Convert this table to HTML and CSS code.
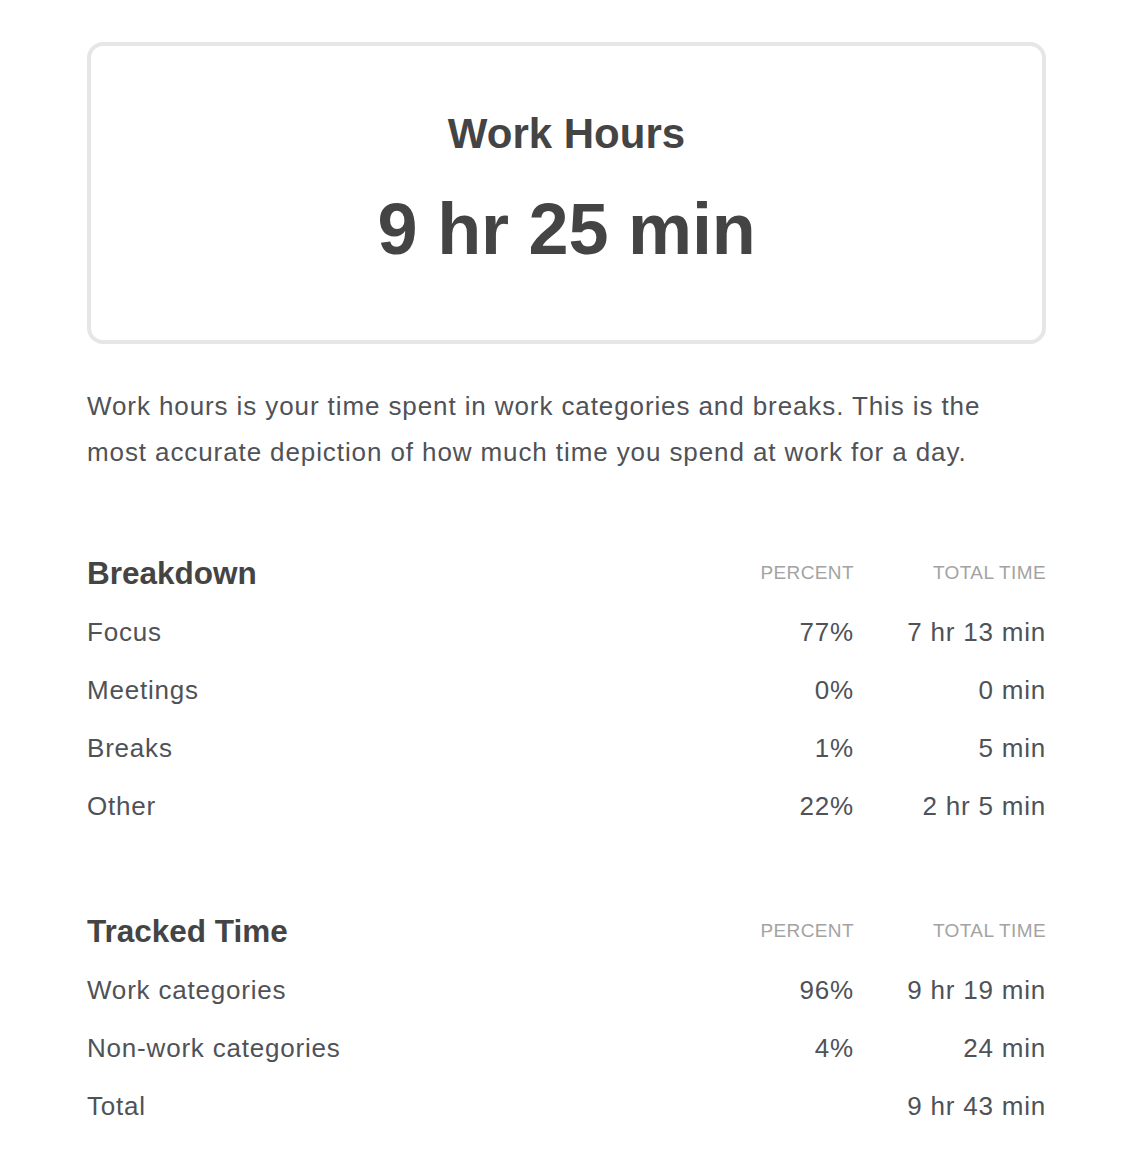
FILE: index.html
```html
<!DOCTYPE html>
<html lang="en">
<head>
<meta charset="utf-8">
<title>Work Hours</title>
<link rel="stylesheet" href="styles.css">
</head>
<body>
<main class="page">
  <section class="card">
    <h1 class="card-title">Work Hours</h1>
    <div class="card-value">9 hr 25 min</div>
  </section>

  <p class="intro">Work hours is your time spent in work categories and breaks. This is the most accurate depiction of how much time you spend at work for a day.</p>

  <section class="table table-breakdown">
    <div class="row head">
      <h2 class="label heading">Breakdown</h2>
      <div class="pct col-label">PERCENT</div>
      <div class="time col-label">TOTAL TIME</div>
    </div>
    <div class="rows">
      <div class="row"><span class="label">Focus</span><span class="pct">77%</span><span class="time">7 hr 13 min</span></div>
      <div class="row"><span class="label">Meetings</span><span class="pct">0%</span><span class="time">0 min</span></div>
      <div class="row"><span class="label">Breaks</span><span class="pct">1%</span><span class="time">5 min</span></div>
      <div class="row"><span class="label">Other</span><span class="pct">22%</span><span class="time">2 hr 5 min</span></div>
    </div>
  </section>

  <section class="table table-tracked">
    <div class="row head">
      <h2 class="label heading">Tracked Time</h2>
      <div class="pct col-label">PERCENT</div>
      <div class="time col-label">TOTAL TIME</div>
    </div>
    <div class="rows">
      <div class="row"><span class="label">Work categories</span><span class="pct">96%</span><span class="time">9 hr 19 min</span></div>
      <div class="row"><span class="label">Non-work categories</span><span class="pct">4%</span><span class="time">24 min</span></div>
      <div class="row"><span class="label">Total</span><span class="pct"></span><span class="time">9 hr 43 min</span></div>
    </div>
  </section>
</main>
</body>
</html>
```

FILE: styles.css
```css
html, body {
  margin: 0;
  padding: 0;
  background: #ffffff;
}

body {
  font-family: "Liberation Sans", Arial, Helvetica, sans-serif;
  color: #4f5257;
}

.page {
  width: 959px;
  margin: 42px 0 0 87px;
}

.card {
  border: 4px solid #e6e6e6;
  border-radius: 16px;
  padding: 64px 0 71px;
  text-align: center;
  color: #444444;
}

.card-title {
  margin: 0;
  font-size: 42px;
  line-height: 48px;
  font-weight: 700;
}

.card-value {
  margin-top: 31px;
  font-size: 72px;
  line-height: 80px;
  font-weight: 700;
  letter-spacing: -0.2px;
}

.intro {
  margin: 39px 0 0;
  max-width: 920px;
  font-size: 26px;
  line-height: 46px;
  letter-spacing: 0.9px;
}

.table-breakdown {
  margin-top: 75px;
}

.table-tracked {
  margin-top: 73px;
}

.row {
  display: flex;
  align-items: center;
  height: 58px;
  font-size: 26px;
  letter-spacing: 0.8px;
}

.row.head {
  height: 46px;
}

.rows {
  margin-top: 7px;
}

.label {
  flex: 1;
}

.heading {
  margin: 0;
  font-size: 31.5px;
  line-height: 46px;
  font-weight: 700;
  letter-spacing: 0;
  color: #444444;
}

.pct {
  width: 150px;
  text-align: right;
}

.time {
  width: 192px;
  text-align: right;
}

.col-label {
  font-size: 19px;
  letter-spacing: 0.4px;
  color: #a3a3a3;
}
```
